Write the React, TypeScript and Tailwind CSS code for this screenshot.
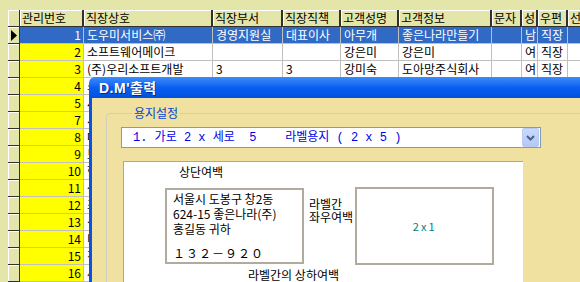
import React from 'react'

const cols = [
  { w: 'w-[64px]', label: '관리번호', right: true },
  { w: 'w-[129px]', label: '직장상호' },
  { w: 'w-[70px]', label: '직장부서' },
  { w: 'w-[58px]', label: '직장직책' },
  { w: 'w-[58px]', label: '고객성명' },
  { w: 'w-[93px]', label: '고객정보' },
  { w: 'w-[30px]', label: '문자' },
  { w: 'w-[16px]', label: '성' },
  { w: 'w-[30px]', label: '우편' },
  { w: 'w-[40px]', label: '선택' },
]

// rows 4.. sit behind the dialog, only the first columns show
const rows = [
  ['1', '도우미서비스㈜', '경영지원실', '대표이사', '아무개', '좋은나라만들기', '', '남', '직장', ''],
  ['2', '소프트웨어메이크', '', '', '강은미', '강은미', '', '여', '직장', ''],
  ['3', '(주)우리소프트개발', '3', '3', '강미숙', '도아망주식회사', '', '여', '직장', ''],
  ['4', '소망상사'],
  ['5', '새한정보'],
  ['7', '서울물산'],
  ['8', '대한통상'],
  ['9', '보람전자'],
  ['10', '한빛상사'],
  ['11', '삼정기획'],
  ['12', '조은산업'],
  ['13', '신우건설'],
  ['14', '미래통신'],
  ['15', '진성유통'],
  ['16', '세림무역'],
]

function Grid() {
  return (
    <div className="pt-[10px] pl-[8px]">
      <div className="flex h-[17px]">
        <div className="w-[12px] shrink-0 bg-[#e3e6a8] border-r border-b border-[#303030] shadow-[inset_1px_1px_0_#ffffff]" />
        {cols.map((c) => (
          <div
            key={c.label}
            className={`${c.w} shrink-0 overflow-hidden whitespace-nowrap bg-[#e3e6a8] border-r-2 border-b border-[#303030] shadow-[inset_1px_1px_0_#ffffff] pl-[2px] leading-[16px] text-black`}
          >
            {c.label}
          </div>
        ))}
      </div>
      {rows.map((r, i) => {
        const sel = i === 0
        return (
          <div key={r[0]} className="flex h-[17px]">
            <div className="w-[12px] shrink-0 bg-[#e3e6a8] border-r border-b border-[#303030] shadow-[inset_1px_1px_0_#ffffff] flex items-center justify-center">
              {sel && (
                <svg width="6" height="11" viewBox="0 0 6 11">
                  <path d="M0 0 L6 5.5 L0 11 Z" fill="#000" />
                </svg>
              )}
            </div>
            {cols.map((c, j) => (
              <div
                key={j}
                className={`${c.w} shrink-0 overflow-hidden whitespace-nowrap border-r border-b border-[#c0c0c0] leading-[16px] ${
                  sel ? 'bg-[#316ac5] text-white' : j === 0 ? 'bg-[#ffff00] text-black' : 'bg-white text-black'
                } ${c.right ? 'text-right pr-[2px]' : 'pl-[3px]'}`}
              >
                {r[j] ?? ''}
              </div>
            ))}
          </div>
        )
      })}
    </div>
  )
}

function Dialog() {
  return (
    <div className="absolute left-[89px] top-[77px] right-[-20px] bottom-[-20px] flex flex-col">
      <div className="h-[21px] shrink-0 rounded-tl-[6px] bg-gradient-to-b from-[#3b8cfb] via-[#0a5ff0] to-[#0050e0] flex items-center pl-[10px]">
        <span className="text-white font-bold text-[14px] tracking-[0.5px] leading-none font-['Liberation_Sans','Noto_Sans_CJK_KR',sans-serif] [text-shadow:1px_1px_0_#0a2a8a]">
          D.M'출력
        </span>
      </div>
      <div className="flex-1 border-l-[3px] border-[#0a53e0] bg-[#f0e1a0] pl-[14px] pt-[8px]">
        <fieldset className="border border-[#d0cfbf] rounded-[4px] pl-[14px] pb-[40px]">
          <legend className="ml-[11px] px-[2px] text-[#0046d5] leading-[14px]">용지설정</legend>
          <div className="mt-[7px] w-[420px] h-[21px] border border-[#7f9db9] bg-white flex items-center">
            <span className="flex-1 pl-[11px] whitespace-pre text-[#0000e8] font-['Liberation_Mono','Noto_Sans_CJK_KR',monospace] text-[12px] leading-[16px]">
              {'1. 가로 2 x 세로  5    라벨용지 ( 2 x 5 )'}
            </span>
            <div className="w-[17px] h-[19px] mr-[1px] rounded-[2px] bg-gradient-to-b from-[#cad9fd] to-[#b4c8f7] border border-[#b9cbf3] flex items-center justify-center">
              <svg width="9" height="6" viewBox="0 0 9 6">
                <path d="M1 1 L4.5 4.5 L8 1" stroke="#4d6185" strokeWidth="2" fill="none" />
              </svg>
            </div>
          </div>
          <div className="mt-[13px] ml-[2px] w-[400px] h-[130px] bg-white border-t border-l border-[#aca899] pl-[41px] pt-[3px]">
            <div className="ml-[14px] leading-[14px]">상단여백</div>
            <div className="flex items-start mt-[8px]">
              <div className="w-[139px] h-[76px] mt-[1px] border-2 border-[#b0ab9c] pl-[6px] pt-[1px] leading-[15px]">
                <div>서울시 도봉구 창2동</div>
                <div>624-15 좋은나라(주)</div>
                <div>홍길동 귀하</div>
                <div className="mt-[9px] tracking-[1px]">１３２－９２０</div>
              </div>
              <div className="ml-[5px] mt-[10px] leading-[13px]">
                <div>라벨간</div>
                <div>좌우여백</div>
              </div>
              <div className="ml-[2px] w-[139px] h-[78px] border-2 border-[#b0ab9c] flex items-center justify-center text-[#008080] text-[11px] tracking-[2px]">
                2x1
              </div>
            </div>
            <div className="ml-[83px] mt-[3px] leading-[14px]">라벨간의 상하여백</div>
          </div>
        </fieldset>
      </div>
    </div>
  )
}

export default function App() {
  return (
    <div className="relative w-[580px] h-[282px] overflow-hidden bg-[#e3e6a8] text-[12px] font-['Noto_Sans_CJK_KR',sans-serif] text-black">
      <Grid />
      <Dialog />
    </div>
  )
}
